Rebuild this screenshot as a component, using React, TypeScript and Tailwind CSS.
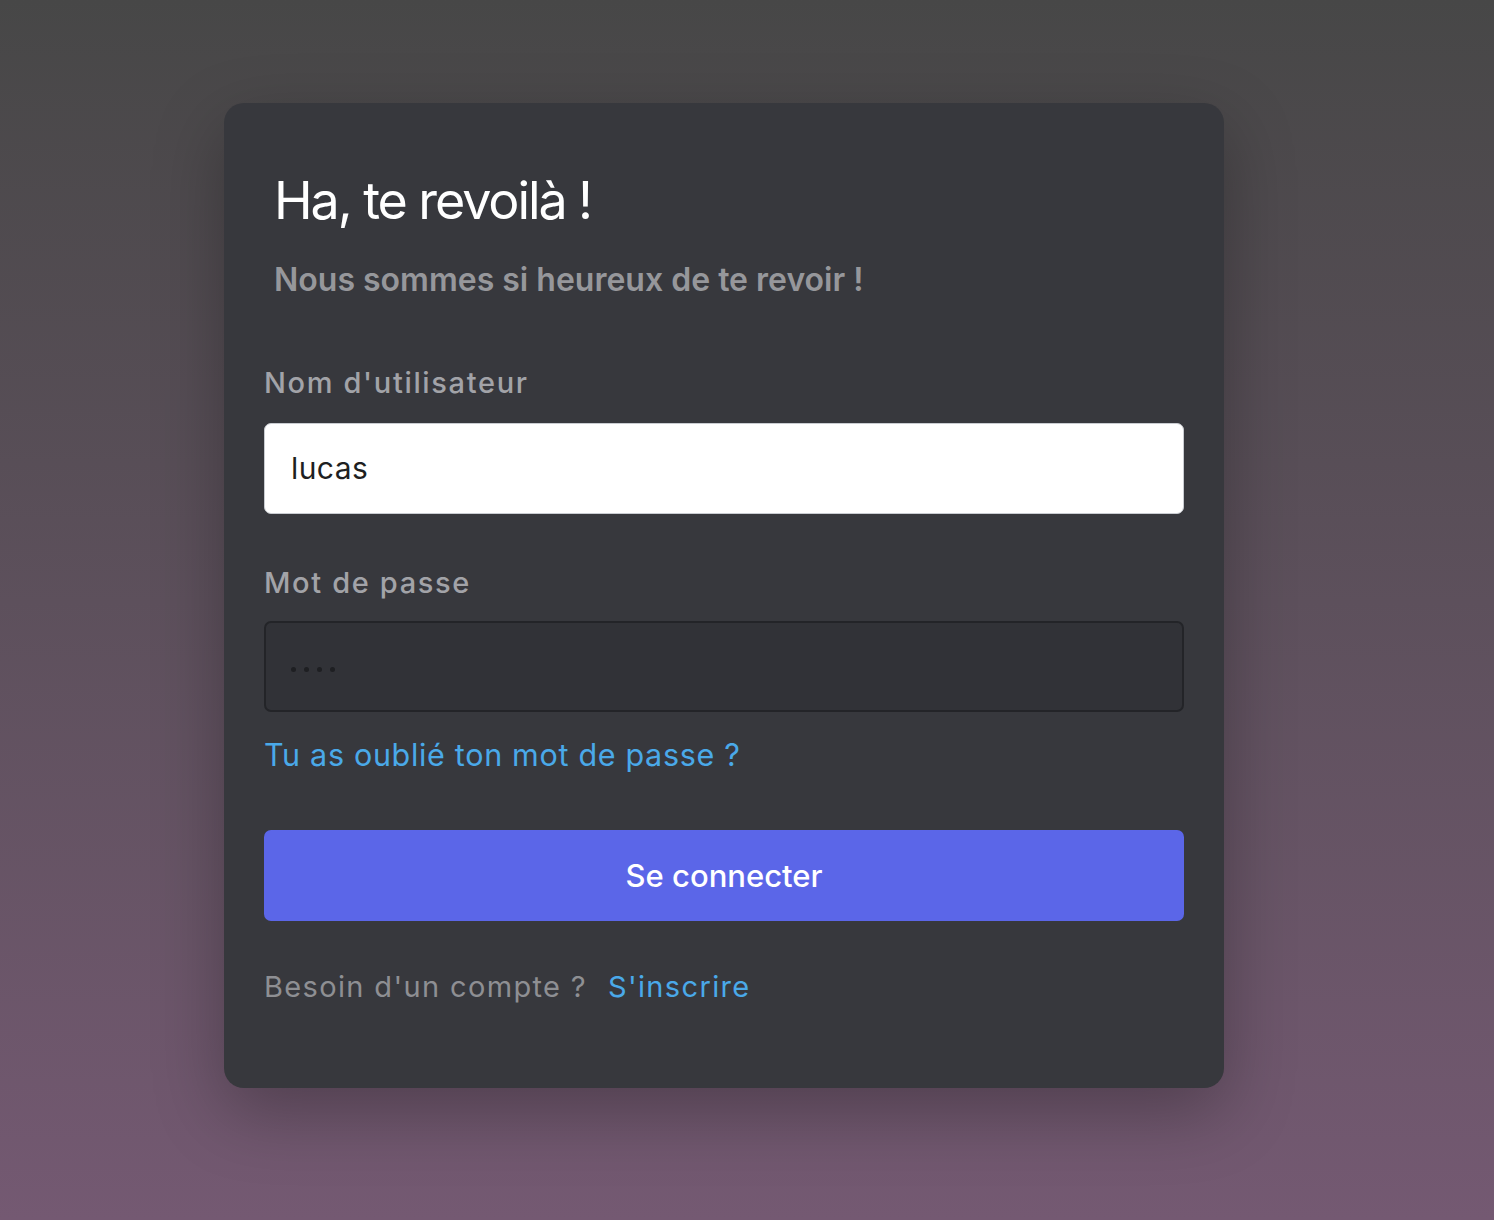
import React from "react";

export default function App() {
  return (
    <div
      className="w-full min-h-[1220px] bg-gradient-to-b from-[#474747] to-[#745972] pt-[103px] pl-[224px]"
      style={{ fontFamily: "Inter, 'Noto Sans', sans-serif" }}
    >
      <div className="w-[1000px] rounded-[20px] bg-[#37383d] pt-[72px] px-[40px] pb-[87px] shadow-[0_24px_70px_rgba(0,0,0,0.28)]">
        <h1 className="pl-[10px] text-[52px] leading-none text-white font-normal tracking-[-0.04em]">
          Ha, te revoilà !
        </h1>
        <p className="pl-[10px] mt-[37px] text-[32px] leading-none font-semibold text-[#96979b]">
          Nous sommes si heureux de te revoir !
        </p>

        <div className="mt-[72px] text-[29px] leading-none font-medium tracking-[1.65px] text-[#a2a3a8]">
          Nom d'utilisateur
        </div>
        <div className="mt-[26px] h-[91px] rounded-[7px] border border-[#c9ccd1] bg-white flex items-center pl-[26px] text-[30px] tracking-[0.4px] text-[#1e1f22]">
          lucas
        </div>

        <div className="mt-[54px] text-[29px] leading-none font-medium tracking-[1.65px] text-[#a2a3a8]">
          Mot de passe
        </div>
        <div className="mt-[24px] h-[91px] rounded-[7px] border-2 border-[#232428] bg-[#313237] flex items-center pl-[25px] gap-[8px] pt-[6px]">
          <span className="w-[5px] h-[5px] rounded-full bg-[#1e1f22]" />
          <span className="w-[5px] h-[5px] rounded-full bg-[#1e1f22]" />
          <span className="w-[5px] h-[5px] rounded-full bg-[#1e1f22]" />
          <span className="w-[5px] h-[5px] rounded-full bg-[#1e1f22]" />
        </div>

        <div className="mt-[28px] text-[30.5px] leading-none tracking-[0.68px] text-[#4aa9e9]">
          Tu as oublié ton mot de passe ?
        </div>

        <button className="mt-[59px] w-full h-[91px] rounded-[7px] bg-[#5b66e8] text-white text-[31px] font-medium flex items-center justify-center pt-[3px]">
          Se connecter
        </button>

        <div className="mt-[51px] text-[29px] leading-none tracking-[1.35px] text-[#8e8f93] flex">
          <span>Besoin d'un compte ?</span>
          <span className="ml-[21px] text-[#4aa9e9]">S'inscrire</span>
        </div>
      </div>
    </div>
  );
}
